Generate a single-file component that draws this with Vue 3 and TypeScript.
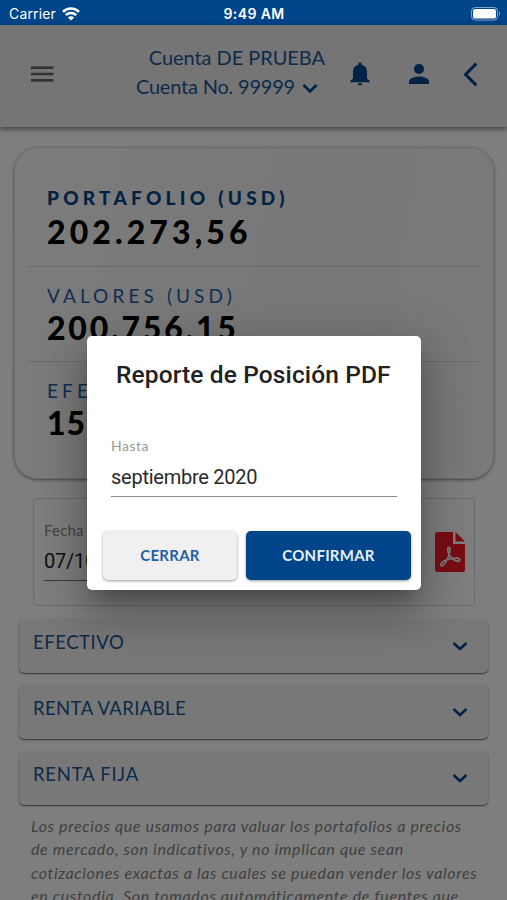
<script setup lang="ts">
interface Balance {
  label: string
  amount: string
  tone: string
}

const balances: Balance[] = [
  { label: 'PORTAFOLIO (USD)', amount: '202.273,56', tone: 'total' },
  { label: 'VALORES (USD)', amount: '200.756,15', tone: 'holdings' },
  { label: 'EFECTIVO (USD)', amount: '1517,41', tone: 'cash' },
]

const sections: string[] = ['EFECTIVO', 'RENTA VARIABLE', 'RENTA FIJA']

const disclaimer: string[] = [
  'Los precios que usamos para valuar los portafolios a precios',
  'de mercado, son indicativos, y no implican que sean',
  'cotizaciones exactas a las cuales se puedan vender los valores',
  'en custodia. Son tomados automáticamente de fuentes que',
]
</script>

<template>
  <div class="screen">
    <div class="status">
      <div class="carrier">
        <span>Carrier</span>
        <svg width="18" height="14" viewBox="0 0 18 14" fill="none" stroke="#fff" stroke-width="2.5">
          <path d="M1 4.9a11.4 11.4 0 0 1 16 0" />
          <path d="M3.8 8.2a7.4 7.4 0 0 1 10.4 0" />
          <path d="M9 13.6 5.9 10.6a4.4 4.4 0 0 1 6.2 0Z" fill="#fff" stroke="none" />
        </svg>
      </div>
      <span class="clock">9:49 AM</span>
      <svg class="battery" width="30" height="14" viewBox="0 0 30 14">
        <rect x=".5" y=".5" width="26" height="12.6" rx="3.6" fill="none" stroke="#fff" stroke-opacity=".5" />
        <rect x="2" y="2" width="23" height="9.6" rx="2.2" fill="#fff" />
        <path d="M28 4.6q2 2.2 0 4.4Z" fill="#fff" fill-opacity=".55" />
      </svg>
    </div>

    <header class="header">
      <svg class="menu" width="24" height="18" viewBox="0 0 24 18" fill="#636363">
        <rect x="1" y="1.4" width="22.5" height="2.6" />
        <rect x="1" y="7.7" width="22.5" height="2.6" />
        <rect x="1" y="14" width="22.5" height="2.6" />
      </svg>
      <div class="account">
        <div class="name">Cuenta DE PRUEBA</div>
        <div class="number">
          <span>Cuenta No. 99999</span>
          <svg width="16" height="11" viewBox="0 0 16 11" fill="none" stroke="#004489" stroke-width="2.8">
            <path d="m1.5 2 6.5 6.4L14.5 2" />
          </svg>
        </div>
      </div>
      <svg class="bell" width="20" height="24" viewBox="0 0 20 24" fill="#004489">
        <path d="M10 .4c1 0 1.7.7 1.7 1.7v.7c3.4.8 5.3 3.7 5.3 7.2v6.4l2.7 2.7v1.2H.3v-1.2L3 16.4V10c0-3.5 1.900-6.400 5.300-7.200v-.7C8.300 1.100 9 .4 10 .4ZM7.800 21.300h4.400a2.200 2.200 0 0 1-4.400 0Z" />
      </svg>
      <svg class="user" width="20" height="20" viewBox="0 0 20 20" fill="#004489">
        <circle cx="10" cy="5" r="5" />
        <path d="M0 20v-2.7C0 13.900 6.600 12.400 10 12.400s10 1.500 10 4.900V20Z" />
      </svg>
      <svg class="back" width="15" height="25" viewBox="0 0 15 25" fill="none" stroke="#004489" stroke-width="3">
        <path d="M13.300 1.600 2.600 12.500l10.700 10.900" />
      </svg>
    </header>

    <main class="content">
      <section class="card">
        <div v-for="b in balances" :key="b.label" class="balance" :class="b.tone">
          <div class="label">{{ b.label }}</div>
          <div class="amount">{{ b.amount }}</div>
        </div>
      </section>

      <section class="date-box">
        <div class="date-field">
          <div class="date-label">Fecha</div>
          <div class="date-value">07/10/2020</div>
        </div>
        <svg width="30" height="40" viewBox="0 0 30 40">
          <path d="M2 0h16v12h12v26a2 2 0 0 1-2 2H2a2 2 0 0 1-2-2V2a2 2 0 0 1 2-2Z" fill="#f01c26" />
          <path d="M20.500 0 30 9.600h-9.500Z" fill="#f01c26" />
          <path
            d="M13.900 15.300c-2 0-1.300 4.500.5 7.900 2 3.600 6.300 6.300 9 6 2.200-.3 1.800-3-1.400-3-4.600 0-9.600 1-13.300 3-2.600 1.500-3.600 4-2.500 4.600 1.700.8 4.600-3.700 6.600-7.700 2-4.100 3.200-10.800 1.100-10.800Z"
            fill="none"
            stroke="#f1f1f1"
            stroke-width="1.8"
            stroke-linejoin="round"
          />
        </svg>
      </section>

      <section class="panels">
        <div v-for="s in sections" :key="s" class="panel">
          <span>{{ s }}</span>
          <svg width="16" height="11" viewBox="0 0 16 11" fill="none" stroke="#004489" stroke-width="2.6">
            <path d="m1.500 2 6.500 6L14.500 2" />
          </svg>
        </div>
      </section>

      <div class="disclaimer">
        <p v-for="line in disclaimer" :key="line">{{ line }}</p>
      </div>
    </main>

    <div class="backdrop">
      <div class="dialog">
        <h2>Reporte de Posición PDF</h2>
        <div class="field">
          <div class="field-label">Hasta</div>
          <div class="field-value">septiembre 2020</div>
        </div>
        <div class="actions">
          <button class="close">CERRAR</button>
          <button class="confirm">CONFIRMAR</button>
        </div>
      </div>
    </div>
  </div>
</template>

<style>
body {
  margin: 0;
  overflow: hidden;
}
</style>

<style scoped>
* {
  box-sizing: border-box;
}
svg {
  display: block;
  flex: none;
}
.screen {
  position: relative;
  display: flex;
  flex-direction: column;
  width: 507px;
  height: 900px;
  overflow: hidden;
  background: #fcfcfc;
  font-family: Lato, "Liberation Sans", sans-serif;
  white-space: nowrap;
}
.status {
  flex: none;
  display: grid;
  grid-template-columns: 1fr auto 1fr;
  align-items: center;
  height: 25px;
  padding: 2px 8px 0 9px;
  background: #004489;
  color: #fff;
  font: 400 14px/20px Inter, sans-serif;
}
.carrier {
  display: flex;
  align-items: center;
  gap: 6px;
  letter-spacing: 0.15px;
}
.clock {
  font-weight: 600;
  letter-spacing: 0.4px;
}
.battery {
  justify-self: end;
  margin-right: -2px;
}
.header {
  flex: none;
  display: flex;
  height: 102px;
  padding-left: 30px;
  background: #ebebeb;
  box-shadow: 0 2px 5px rgba(0, 0, 0, 0.5);
  color: #1d5596;
}
.menu {
  margin-top: 40px;
}
.account {
  display: flex;
  flex-direction: column;
  align-items: flex-end;
  width: 271px;
  padding-top: 17px;
  font-size: 20px;
  line-height: 30px;
}
.name {
  letter-spacing: -0.05px;
}
.number {
  display: flex;
  align-items: center;
  gap: 7px;
  padding-right: 7px;
  line-height: 29px;
  letter-spacing: -0.2px;
}
.number svg {
  margin-top: 4px;
}
.bell {
  margin: 37px 0 0 25px;
}
.user {
  margin: 39px 0 0 39px;
}
.back {
  margin: 37px 0 0 34px;
}
.content {
  padding: 20px 19px 0;
}
.card {
  height: 332px;
  margin: 0 -6px 0 -5px;
  padding: 23px 13px 0;
  border: 1px solid #dcdcdc;
  border-radius: 24px;
  background: linear-gradient(100deg, #f8f8f8, #f0f0f0 60%, #f4f4f4);
  box-shadow: 0 1px 3px rgba(0, 0, 0, 0.5);
}
.balance {
  height: 95.5px;
  padding: 16px 19px 0;
  border-bottom: 1px solid #d6d6d6;
}
.balance:last-child {
  border: 0;
}
.label {
  color: #1b5ea6;
  font-size: 19px;
  line-height: 25px;
  letter-spacing: 4.1px;
}
.total {
  padding-top: 14px;
}
.total .label {
  color: #004489;
  font-weight: 900;
  letter-spacing: 4.25px;
}
.amount {
  color: #000;
  font-size: 32px;
  font-weight: 900;
  line-height: 40px;
  letter-spacing: 2.8px;
}
.total .amount {
  padding-top: 2px;
  letter-spacing: 4.1px;
}
.cash .amount {
  letter-spacing: 1px;
}
.date-box {
  display: flex;
  justify-content: space-between;
  height: 108px;
  margin: 19px 13px 0 14px;
  padding: 33px 9px 0 10px;
  border: 1px solid #d8d8d8;
  border-radius: 3px;
}
.date-field {
  width: 150px;
  height: 61px;
  margin-top: -12px;
  border-bottom: 1px solid #777;
}
.date-label {
  color: #8a8a8a;
  font-size: 15px;
  line-height: 20px;
  letter-spacing: 0.2px;
}
.date-value {
  padding-top: 6px;
  color: #222;
  font: 400 20px/30px Roboto, sans-serif;
  letter-spacing: -0.25px;
}
.panels {
  display: grid;
  gap: 12px;
  margin-top: 13px;
}
.panel {
  display: flex;
  justify-content: space-between;
  height: 54px;
  padding: 9px 20px 0 14px;
  border-radius: 5px;
  background: #f1f1f1;
  box-shadow: 0 1px 1.5px rgba(0, 0, 0, 0.6);
  color: #1b5590;
  font-size: 18.5px;
  line-height: 28px;
  letter-spacing: 0.55px;
}
.panel:nth-child(2) {
  letter-spacing: 0.4px;
}
.panel:nth-child(3) {
  letter-spacing: 0.75px;
}
.panel svg {
  margin-top: 13px;
}
.disclaimer {
  padding: 9px 0 0 12px;
  color: #808080;
  font-size: 16px;
  font-style: italic;
  line-height: 23.3px;
}
.disclaimer p {
  margin: 0;
  letter-spacing: 0.65px;
}
.backdrop {
  position: absolute;
  inset: 25px 0 0;
  padding: 311px 86px 0 87px;
  background: rgba(0, 0, 0, 0.5);
}
.dialog {
  height: 254px;
  padding: 20px 10px 0 16px;
  border-radius: 5px;
  background: #fff;
  box-shadow: 0 14px 18px -8px rgba(0, 0, 0, 0.25), 0 26px 42px 3px rgba(0, 0, 0, 0.16), 0 10px 50px 8px rgba(0, 0, 0, 0.15);
}
h2 {
  margin: 0 0 0 13px;
  color: #212121;
  font: 500 24.5px/38px Roboto, sans-serif;
  letter-spacing: 0.12px;
}
.field {
  height: 78px;
  margin: 25px 14px 0 8px;
  padding-top: 17px;
  border-bottom: 1px solid #8c8c8c;
}
.field-label {
  color: #999;
  font-size: 14px;
  line-height: 20px;
  letter-spacing: 0.5px;
}
.field-value {
  padding-top: 5px;
  color: #2a2a2a;
  font: 400 20px/32px Roboto, sans-serif;
  letter-spacing: -0.25px;
}
.actions {
  display: flex;
  gap: 9px;
  margin-top: 34px;
}
button {
  height: 49px;
  padding: 0 0 2px;
  border: 0;
  border-radius: 5px;
  box-shadow: 0 1px 3px rgba(0, 0, 0, 0.4);
  font: 700 15px/20px Lato, sans-serif;
  letter-spacing: 0.25px;
}
.close {
  width: 134px;
  background: #f0f0f0;
  color: #1f5fa8;
}
.confirm {
  width: 165px;
  background: #004489;
  color: #e9f1fa;
}
</style>
